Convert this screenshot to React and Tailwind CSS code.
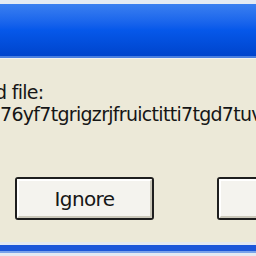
import React from 'react';

const font = { fontFamily: '"DejaVu Sans", Verdana, sans-serif' };

const XpButton = ({ label, className = '' }) => (
  <div className={`h-[43px] shrink-0 border-2 border-[#1e1e1e] rounded-[3px] bg-[#f4f3ee] ${className}`}>
    <div className="w-full h-full border-2 border-t-white border-l-white border-b-[#cbc8ba] border-r-[#cbc8ba] flex items-center justify-center">
      <span className="text-[20px] tracking-[-0.6px] text-[#161616]">{label}</span>
    </div>
  </div>
);

export default function App() {
  return (
    <div className="w-[256px] h-[256px] overflow-hidden bg-[#ece9d8] flex flex-col" style={font}>
      {/* top edge + title bar */}
      <div className="h-[4px] bg-[#e4eaf3]" />
      <div className="h-[52px] bg-gradient-to-b from-[#3a7ff0] via-[#0658ea] to-[#0044cc]" />
      <div className="h-[2px] bg-[#4a7fe0]" />
      <div className="h-[1px] bg-[#f4f3ee]" />

      {/* message */}
      <div className="pt-[22px] flex flex-col text-[#161616] whitespace-nowrap">
        <div className="text-[19px] leading-[22px] -ml-[5px] tracking-[-0.7px]">d file:</div>
        <div className="text-[19px] leading-[22px] tracking-[-0.7px]">76yf7tgrigzrjfruictitti7tgd7tuv</div>
      </div>

      {/* buttons */}
      <div className="mt-[52px] pl-[15px] flex gap-[63px]">
        <XpButton label="Ignore" className="w-[139px]" />
        <XpButton label="" className="w-[80px]" />
      </div>

      <div className="flex-1" />
      {/* bottom edge */}
      <div className="h-[3px] bg-[#e2e8f2]" />
      <div className="h-[6px] bg-[#1b56d9]" />
      <div className="h-[2px] bg-[#7aa3ea]" />
      <div className="h-[3px] bg-[#e4eaf3]" />
    </div>
  );
}
